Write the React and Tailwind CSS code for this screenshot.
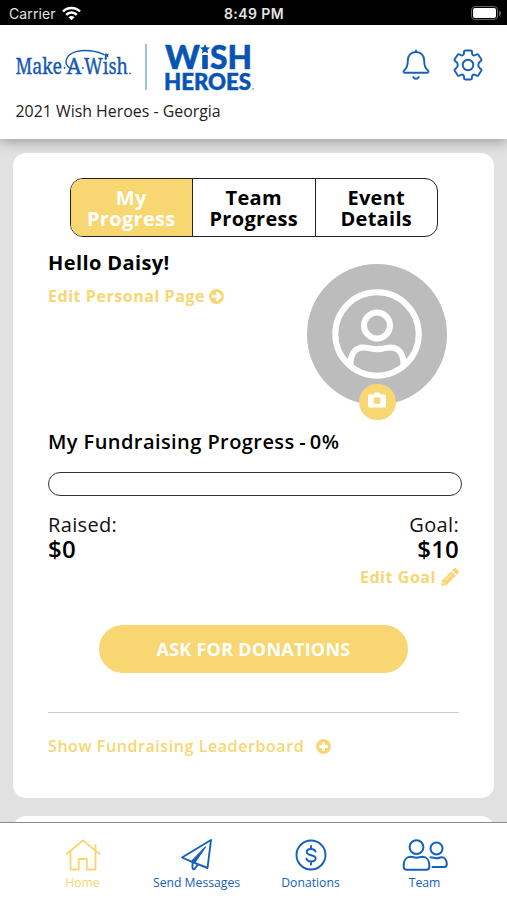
// Make-A-Wish wordmark with the swoosh over the "A"
function MakeAWishLogo() {
  return (
    <svg width="118" height="30" viewBox="0 0 118 30" className="mt-[7px] overflow-visible">
      <g fill="#1559b3" stroke="#1559b3" strokeWidth="0.35" className="font-['Noto_Serif','Liberation_Serif',serif]">
        <text x="0.500" y="25" fontSize="21" textLength="46.500" lengthAdjust="spacingAndGlyphs">Make</text>
        <text x="51.500" y="25" fontSize="21" textLength="15" lengthAdjust="spacingAndGlyphs">A</text>
        <text x="69" y="25" fontSize="21" textLength="44" lengthAdjust="spacingAndGlyphs">Wish</text>
      </g>
      <g fill="#1559b3">
        <circle cx="49.500" cy="19" r="0.900" />
        <circle cx="67.800" cy="19" r="0.900" />
        <circle cx="115" cy="24.300" r="0.900" />
      </g>
      <path d="M55.500 19.500c-4-2.500-5.500-6.500-3.500-10.500C55 2.500 66 .8 75 1.800c6 .7 11 2.200 14.500 4" fill="none" stroke="#1559b3" strokeWidth="1.400" />
      <path d="M90.500 3.800l1.500 1.200 2-.2-1 1.700.5 1.900-1.800-.7-1.700.9.100-1.900-1.400-1.300 1.900-.2z" fill="#1559b3" />
    </svg>
  );
}

function WishHeroesLogo() {
  return (
    <svg width="92" height="50" viewBox="0 0 92 50" className="overflow-visible">
      <g fill="#0754b5" stroke="#0754b5" strokeWidth="0.500" className="font-[Lato,sans-serif] font-black">
        <text x="1" y="27" fontSize="33" textLength="35" lengthAdjust="spacingAndGlyphs">W</text>
        <text x="46" y="27" fontSize="33" textLength="42" lengthAdjust="spacingAndGlyphs">SH</text>
        <text x="0" y="47.500" fontSize="22.500" textLength="87" lengthAdjust="spacingAndGlyphs">HEROES</text>
      </g>
      <path d="M38.200 13h5.600v14h-5.600z" fill="#0754b5" />
      <path d="M41 2l1.500 3.200 3.500.4-2.600 2.400.7 3.500L41 9.800l-3.100 1.700.7-3.500L36 5.600l3.500-.4z" fill="#0754b5" />
      <circle cx="89" cy="47" r="0.700" fill="#0754b5" />
    </svg>
  );
}

function BellIcon() {
  return (
    <svg width="28" height="32" viewBox="0 0 28 32" fill="none" stroke="#1560bd" strokeWidth="1.900" strokeLinecap="round" strokeLinejoin="round">
      <path d="M14 1.500V3M14 3c-5 0-8.200 3.700-8.200 8.500 0 5.300-1 8-3.600 9.700-1.200.9-.8 2.600.7 2.600h22.200c1.500 0 1.900-1.700.7-2.600-2.600-1.700-3.600-4.400-3.600-9.700C22.200 6.700 19 3 14 3zM11.300 28c.5 1 1.500 1.700 2.700 1.700s2.200-.7 2.700-1.700" />
    </svg>
  );
}

function GearIcon() {
  return (
    <svg width="32" height="32" viewBox="0 0 32 32" fill="none" stroke="#1560bd" strokeWidth="1.900" strokeLinejoin="round">
      <path d="M13.200 1.500h5.600c.7 0 1.200.5 1.200 1.200v1.600c0 1.700 1.700 2.700 3.200 1.900l1.500-.9c.6-.3 1.200-.1 1.600.4l3 4.600c.4.6.2 1.300-.4 1.700l-.9.600c-2.300 1.400-2.300 5.400 0 6.800l.9.600c.6.400.8 1.100.4 1.700l-3 4.600c-.4.500-1 .7-1.600.4l-1.500-.9c-1.500-.8-3.200.2-3.200 1.900v1.600c0 .7-.5 1.200-1.200 1.200h-5.600c-.7 0-1.200-.5-1.200-1.200v-1.600c0-1.700-1.700-2.700-3.200-1.900l-1.500.9c-.6.3-1.200.1-1.600-.4l-3-4.600c-.4-.6-.2-1.300.4-1.700l.9-.600c2.300-1.400 2.300-5.400 0-6.800l-.9-.6c-.6-.4-.8-1.100-.4-1.700l3-4.600c.4-.5 1-.7 1.600-.4l1.500.9c1.500.8 3.200-.2 3.200-1.900V2.700c0-.7.5-1.200 1.200-1.200z" />
      <circle cx="16" cy="16" r="5.300" />
    </svg>
  );
}

function HomeIcon() {
  return (
    <svg width="36" height="34" viewBox="0 0 36 34" fill="none" stroke="#f8d671" strokeWidth="1.800" strokeLinecap="round" strokeLinejoin="round">
      <path d="M1.500 16L18 2.500 34.500 16M5.500 13.500v18h8.300V21h8v10.500h8.700V7" />
    </svg>
  );
}

function SendIcon() {
  return (
    <svg width="34" height="34" viewBox="0 0 34 34" fill="none" stroke="#1560bd" strokeWidth="1.900" strokeLinecap="round" strokeLinejoin="round">
      <path d="M31 2L2 19.500l9.500 4.200L27.500 30zM12.500 24.300v5.200c0 1.900 1.500 2.200 2.500.9l2.500-3.400" />
      <path d="M25.500 9L11.500 23.500l3 1.300z" fill="#1560bd" strokeWidth="1.200" />
    </svg>
  );
}

function DollarIcon() {
  return (
    <svg width="32" height="34" viewBox="0 0 32 34" fill="none" stroke="#1560bd" strokeWidth="1.900" strokeLinecap="round">
      <circle cx="16" cy="17" r="14.500" />
      <path d="M16 8v3M16 23.500v3M20.500 13.500c-.6-1.700-2.300-2.500-4.500-2.500-2.500 0-4.300 1.100-4.300 3.100 0 4.300 9 2 9 6.200 0 2-2 3.200-4.600 3.200-2.400 0-4.200-1-4.700-2.800" />
    </svg>
  );
}

function TeamIcon() {
  return (
    <svg width="46" height="34" viewBox="0 0 46 34" fill="none" stroke="#1560bd" strokeWidth="2" strokeLinecap="round" strokeLinejoin="round">
      <circle cx="14.500" cy="9.200" r="6.900" />
      <path d="M8.500 18.800c2.500 0 3.500.9 6 .9s3.500-.9 6-.9c4.300 0 6.800 3.700 6.800 8.400v1.600c0 1.900-1.200 2.900-2.900 2.900H4.600c-1.700 0-2.900-1-2.900-2.900v-1.600c0-4.700 2.500-8.400 6.800-8.400z" />
      <circle cx="34.500" cy="10.500" r="6" />
      <path d="M28.500 19.300c2.500 0 3.500.9 6 .9s3-.9 5-.9c3.500 0 5.300 3.300 5.300 6.700 0 2-.9 3-2.600 3H30.500" />
    </svg>
  );
}

function AvatarIcon() {
  return (
    <svg width="90" height="90" viewBox="0 0 90 90" fill="none" stroke="#fff" strokeWidth="6">
      <circle cx="45" cy="45" r="41.700" />
      <circle cx="45" cy="36.500" r="13" />
      <path d="M18.500 76c0-11 4.500-17.500 13-17.500 5 0 8 1.700 13.500 1.700s8.500-1.700 13.500-1.700c8.500 0 13 6.500 13 17.500" />
    </svg>
  );
}

function CameraIcon() {
  return (
    <svg width="18" height="16" viewBox="0 0 18 16">
      <path d="M1.500 2.500h4.200L6.800.6h4.400l1.100 1.900h4.200c.8 0 1.500.6 1.500 1.500v10c0 .9-.7 1.500-1.500 1.500h-15C.7 15.500 0 14.900 0 14V4c0-.9.7-1.500 1.500-1.500z" fill="#fff" />
      <rect x="5.700" y="5.300" width="6.600" height="6.600" rx="2" fill="#f8d671" />
    </svg>
  );
}

function ArrowCircleIcon() {
  return (
    <svg width="15" height="15" viewBox="0 0 15 15">
      <circle cx="7.500" cy="7.500" r="7.400" fill="#f8d671" />
      <path d="M2.800 7.500h8M7.300 3.400l4.100 4.100-4.100 4.100" fill="none" stroke="#fff" strokeWidth="2.400" />
    </svg>
  );
}

function PlusCircleIcon() {
  return (
    <svg width="15" height="15" viewBox="0 0 15 15">
      <circle cx="7.500" cy="7.500" r="7.400" fill="#f8d671" />
      <path d="M3.300 7.500h8.400M7.500 3.300v8.400" stroke="#fff" strokeWidth="2.800" />
    </svg>
  );
}

function PencilIcon() {
  return (
    <svg width="18" height="18" viewBox="0 0 18 18" fill="#f8d671">
      <path d="M10.300 3.200l4.500 4.500-9.300 9.200L.3 17.700l.9-5.300z" />
      <path d="M11.200 2.300L12.900.6c.7-.7 1.600-.7 2.300 0l2.200 2.200c.7.700.7 1.600 0 2.300l-1.700 1.700z" />
      <path d="M4.500 12.200l6.300-6.200M2 14.300l1.700 1.700" stroke="#fff" strokeWidth="0.900" />
    </svg>
  );
}

const tabs = [
  { lines: ['My', 'Progress'], active: true },
  { lines: ['Team', 'Progress'], active: false },
  { lines: ['Event', 'Details'], active: false },
];

const navItems = [
  { label: 'Home', icon: HomeIcon, active: true },
  { label: 'Send Messages', icon: SendIcon },
  { label: 'Donations', icon: DollarIcon },
  { label: 'Team', icon: TeamIcon },
];

function StatusBar() {
  return (
    <div className="grid h-[25px] shrink-0 grid-cols-3 items-center bg-black pt-[2px] pr-[6px] pl-[9px] font-[Inter,sans-serif] text-[14px] text-[#e4e4e4]">
      <div className="flex items-center gap-[6px]">
        <span className="tracking-[0.1px]">Carrier</span>
        <svg width="19" height="15" viewBox="0 0 19 15" fill="none" stroke="#fff" strokeWidth="2.500">
          <path d="M1 5.500C5.500.8 13.500.8 18 5.500M4.200 8.800c3-3 7.600-3 10.600 0" />
          <path d="M9.500 14.300L6.500 11.200c1.700-1.500 4.300-1.500 6 0z" fill="#fff" stroke="none" />
        </svg>
      </div>
      <span className="pr-[2px] text-center font-semibold tracking-[0.4px]">8:49 PM</span>
      <div className="flex items-center justify-end gap-px pb-px">
        <div className="h-[14px] w-[27px] rounded-[4px] border border-[#666] p-px">
          <div className="h-full rounded-[2px] bg-white" />
        </div>
        <div className="h-[5px] w-[2px] rounded-r bg-[#666]" />
      </div>
    </div>
  );
}

function Header() {
  return (
    <header className="relative z-10 h-[114px] shrink-0 bg-white px-[15px] pt-[17px] shadow-[0_3px_12px_rgba(0,0,0,0.3)]">
      <div className="flex h-[50px] items-start">
        <MakeAWishLogo />
        <div className="mt-[2px] ml-[12px] h-[46px] w-[1.500px] bg-[#9dbfe3]" />
        <div className="ml-[17.500px]">
          <WishHeroesLogo />
        </div>
        <div className="mt-[7px] mr-[8.500px] ml-auto flex items-center gap-[22px]">
          <BellIcon />
          <GearIcon />
        </div>
      </div>
      <p className="mt-[8px] pl-[0.500px] text-[15.900px] leading-[22px] text-[#222]">2021 Wish Heroes - Georgia</p>
    </header>
  );
}

function ProgressCard() {
  return (
    <section className="mx-[13px] mt-[14px] h-[645px] shrink-0 rounded-[13px] bg-white px-[35px] pt-[25px]">
      <div className="ml-[21.500px] flex h-[59px] w-[368.500px] overflow-hidden rounded-[13px] border-[1.500px] border-[#222]">
        {tabs.map((tab, i) => (
          <button
            key={i}
            className={`flex flex-1 flex-col items-center justify-center pt-[2px] text-[20px] leading-[20.500px] font-bold tracking-[0.3px] ${i > 0 ? 'border-l border-[#222]' : ''} ${
              tab.active ? 'bg-[#f8d671] text-white' : 'text-black'
            }`}
          >
            <span>{tab.lines[0]}</span>
            <span>{tab.lines[1]}</span>
          </button>
        ))}
      </div>

      <div className="flex h-[191px] justify-between">
        <div className="pt-[12px]">
          <h1 className="text-[20px] leading-[28px] font-bold tracking-[0.4px] text-black">Hello Daisy!</h1>
          <a className="mt-[7px] flex items-center gap-[3.500px] text-[16px] leading-[24px] font-bold tracking-[0.55px] text-[#f8d671]">
            Edit Personal Page
            <ArrowCircleIcon />
          </a>
        </div>
        <div className="relative mt-[27px] mr-[12px] flex h-[140.500px] w-[140.500px] items-center justify-center rounded-full bg-[#bcbcbc]">
          <AvatarIcon />
          <div className="absolute top-[120px] left-[52px] flex h-[36px] w-[37px] items-center justify-center rounded-full bg-[#f8d671] pb-[4px]">
            <CameraIcon />
          </div>
        </div>
      </div>

      <h2 className="text-[20px] leading-[28px] font-semibold tracking-[0.43px] text-black">
        My Fundraising Progress <span className="-ml-px">-</span> <span className="-ml-[2px]">0%</span>
      </h2>
      <div className="mt-[16px] mr-[-3px] h-[24px] rounded-full border-[1.500px] border-[#333]" />

      <div className="mt-[16px] flex justify-between">
        <div>
          <p className="text-[20px] leading-[26px] tracking-[0.35px]">Raised:</p>
          <p className="text-[24px] leading-[21px] font-semibold tracking-[0.2px] text-black">$0</p>
        </div>
        <div className="text-right">
          <p className="text-[20px] leading-[26px] tracking-[0.35px]">Goal:</p>
          <p className="text-[24px] leading-[21px] font-semibold tracking-[0.2px] text-black">$10</p>
        </div>
      </div>
      <a className="mt-[6px] flex items-center justify-end gap-[5px] text-[16px] leading-[24px] font-bold tracking-[0.55px] text-[#f8d671]">
        Edit Goal
        <PencilIcon />
      </a>

      <button className="mx-auto mt-[36px] block h-[48px] w-[309px] rounded-full bg-[#f8d671] text-[18px] font-bold tracking-[0.25px] text-white">
        ASK FOR DONATIONS
      </button>

      <div className="mt-[39px] h-px bg-[#ccc]" />
      <a className="mt-[21px] flex items-center gap-[11.500px] text-[16px] leading-[24px] font-semibold tracking-[0.58px] text-[#f8d671]">
        Show Fundraising Leaderboard
        <PlusCircleIcon />
      </a>
    </section>
  );
}

function BottomNav() {
  return (
    <nav className="flex h-[78px] shrink-0 justify-center border-t border-[#888] bg-white pt-[15px]">
      {navItems.map((item) => {
        const Icon = item.icon;
        return (
          <a key={item.label} className={`flex w-[114px] flex-col items-center text-[12.200px] ${item.active ? 'text-[#f8d671]' : 'text-[#1560bd]'}`}>
            <Icon />
            <span className="pt-px leading-[20px]">{item.label}</span>
          </a>
        );
      })}
    </nav>
  );
}

export default function App() {
  return (
    <div className="flex h-[900px] w-[507px] flex-col overflow-hidden bg-[#e1e1e1] font-['Open_Sans',sans-serif] text-[#111]">
      <StatusBar />
      <Header />
      <main className="flex min-h-0 flex-1 flex-col overflow-hidden">
        <ProgressCard />
        <section className="mx-[13px] mt-[18px] h-[60px] shrink-0 rounded-[13px] bg-white" />
      </main>
      <BottomNav />
    </div>
  );
}
